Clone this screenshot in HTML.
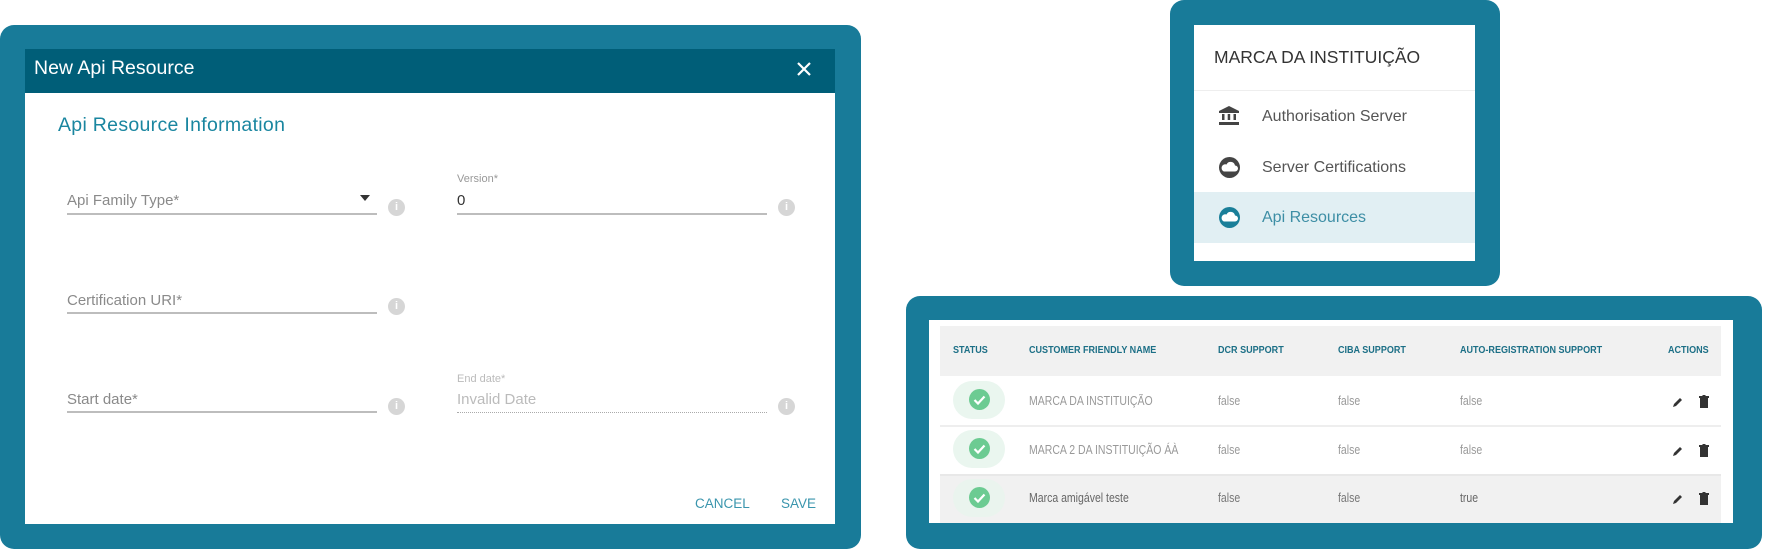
<!DOCTYPE html>
<html><head><meta charset="utf-8"><style>
*{margin:0;padding:0;box-sizing:border-box}
body{width:1766px;height:550px;background:#fff;position:relative;overflow:hidden;font-family:"Liberation Sans",sans-serif}
.a{position:absolute}
.frame{background:#187b99;border-radius:14px}
.t{position:absolute;white-space:nowrap;line-height:1}
.lbl{color:#8a8a8a;font-size:15px}
.ul{position:absolute;height:2px;background:#bdbdbd}
.info{position:absolute;width:17px;height:17px;border-radius:50%;background:#d6d6d6;color:#fff;font-size:11px;font-weight:bold;text-align:center;line-height:17px}
.th{position:absolute;top:344px;font-size:10.5px;font-weight:bold;color:#1c6f86;white-space:nowrap;transform:scaleX(0.86);transform-origin:left}
.td{position:absolute;font-size:12.5px;color:#999;white-space:nowrap;transform:scaleX(0.84);transform-origin:left}
.pill{position:absolute;left:953px;width:52px;height:38px;border-radius:19px;background:#eaf6ef}
.chk{position:absolute;left:16px;top:8px;width:21px;height:21px;border-radius:50%;background:#6ccb92}
</style></head><body>

<!-- Dialog -->
<div class="a frame" style="left:0;top:25px;width:861px;height:524px"></div>
<div class="a" style="left:25px;top:49px;width:810px;height:475px;background:#fff"></div>
<div class="a" style="left:25px;top:49px;width:810px;height:44px;background:#005e78"></div>
<div class="t" style="left:34px;top:59px;color:#fff;font-size:19.5px">New Api Resource</div>
<svg class="a" style="left:797px;top:62px" width="14" height="14" viewBox="0 0 14 14"><path d="M1 1L13 13M13 1L1 13" stroke="#fff" stroke-width="2.2"/></svg>
<div class="t" style="left:58px;top:116px;color:#1a86a0;font-size:19.5px;letter-spacing:0.3px">Api Resource Information</div>

<div class="t lbl" style="left:67px;top:193px">Api Family Type*</div>
<svg class="a" style="left:360px;top:195px" width="10" height="6"><path d="M0 0H10L5 6Z" fill="#333"/></svg>
<div class="ul" style="left:67px;top:213px;width:310px"></div>
<div class="info" style="left:388px;top:199px">i</div>

<div class="t" style="left:457px;top:174px;color:#999;font-size:11px">Version*</div>
<div class="t" style="left:457px;top:193px;color:#333;font-size:15px">0</div>
<div class="ul" style="left:457px;top:213px;width:310px"></div>
<div class="info" style="left:778px;top:199px">i</div>

<div class="t lbl" style="left:67px;top:293px">Certification URI*</div>
<div class="ul" style="left:67px;top:312px;width:310px"></div>
<div class="info" style="left:388px;top:298px">i</div>

<div class="t lbl" style="left:67px;top:392px">Start date*</div>
<div class="ul" style="left:67px;top:411px;width:310px"></div>
<div class="info" style="left:388px;top:398px">i</div>

<div class="t" style="left:457px;top:374px;color:#bbb;font-size:11px">End date*</div>
<div class="t" style="left:457px;top:392px;color:#bbb;font-size:15px">Invalid Date</div>
<div class="a" style="left:457px;top:412px;width:310px;border-top:1px dotted #aaa"></div>
<div class="info" style="left:778px;top:398px">i</div>

<div class="t" style="left:695px;top:497px;color:#3a95ad;font-size:13.5px">CANCEL</div>
<div class="t" style="left:781px;top:497px;color:#3a95ad;font-size:13.5px">SAVE</div>

<!-- Menu -->
<div class="a frame" style="left:1170px;top:0;width:330px;height:286px"></div>
<div class="a" style="left:1194px;top:25px;width:281px;height:236px;background:#fff"></div>
<div class="t" style="left:1214px;top:49px;color:#333;font-size:17.5px">MARCA DA INSTITUIÇÃO</div>
<div class="a" style="left:1194px;top:90px;width:281px;height:1px;background:#eee"></div>
<div class="a" style="left:1194px;top:192px;width:281px;height:51px;background:#e1eff3"></div>
<svg class="a" style="left:1219px;top:106px" width="20" height="20" viewBox="0 0 20 20"><path d="M10 0L20 5V7H0V5Z" fill="#444"/><rect x="3" y="8" width="2.5" height="6" fill="#444"/><rect x="8.7" y="8" width="2.5" height="6" fill="#444"/><rect x="14.5" y="8" width="2.5" height="6" fill="#444"/><rect x="0" y="16" width="20" height="3" fill="#444"/></svg>
<div class="t" style="left:1262px;top:109px;color:#555;font-size:16px">Authorisation Server</div>
<svg class="a" style="left:1219px;top:157px" width="21" height="21" viewBox="0 0 21 21"><circle cx="10.5" cy="10.5" r="10.5" fill="#444"/><path d="M5 14.5h11a3 3 0 0 0 0-6 4.5 4.5 0 0 0-8.5-1A3.5 3.5 0 0 0 5 14.5z" fill="#fff"/></svg>
<div class="t" style="left:1262px;top:160px;color:#555;font-size:16px">Server Certifications</div>
<svg class="a" style="left:1219px;top:207px" width="21" height="21" viewBox="0 0 21 21"><circle cx="10.5" cy="10.5" r="10.5" fill="#1a7f99"/><path d="M5 14.5h11a3 3 0 0 0 0-6 4.5 4.5 0 0 0-8.5-1A3.5 3.5 0 0 0 5 14.5z" fill="#fff"/></svg>
<div class="t" style="left:1262px;top:210px;color:#3d8ea5;font-size:16px">Api Resources</div>

<!-- Table -->
<div class="a frame" style="left:906px;top:296px;width:856px;height:253px"></div>
<div class="a" style="left:929px;top:320px;width:804px;height:203px;background:#fff"></div>
<div class="a" style="left:940px;top:326px;width:781px;height:50px;background:#f1f1f1"></div>
<div class="a" style="left:940px;top:425px;width:781px;height:2px;background:#eee"></div>
<div class="a" style="left:940px;top:474px;width:781px;height:49px;background:#f1f1f1;border-top:2px solid #e8e8e8"></div>
<div class="th" style="left:953px">STATUS</div>
<div class="th" style="left:1029px">CUSTOMER FRIENDLY NAME</div>
<div class="th" style="left:1218px">DCR SUPPORT</div>
<div class="th" style="left:1338px">CIBA SUPPORT</div>
<div class="th" style="left:1460px">AUTO-REGISTRATION SUPPORT</div>
<div class="th" style="left:1668px">ACTIONS</div>

<div class="pill" style="top:381px"><div class="chk"><svg width="21" height="21"><path d="M5.5 11l3.5 3.5 6.5-7" stroke="#fff" stroke-width="2.2" fill="none"/></svg></div></div>
<div class="pill" style="top:430px"><div class="chk"><svg width="21" height="21"><path d="M5.5 11l3.5 3.5 6.5-7" stroke="#fff" stroke-width="2.2" fill="none"/></svg></div></div>
<div class="pill" style="top:479px;background:#eaf4ee"><div class="chk"><svg width="21" height="21"><path d="M5.5 11l3.5 3.5 6.5-7" stroke="#fff" stroke-width="2.2" fill="none"/></svg></div></div>

<div class="td" style="left:1029px;top:394px">MARCA DA INSTITUIÇÃO</div>
<div class="td" style="left:1218px;top:394px">false</div>
<div class="td" style="left:1338px;top:394px">false</div>
<div class="td" style="left:1460px;top:394px">false</div>
<div class="td" style="left:1029px;top:443px">MARCA 2 DA INSTITUIÇÃO ÁÀ</div>
<div class="td" style="left:1218px;top:443px">false</div>
<div class="td" style="left:1338px;top:443px">false</div>
<div class="td" style="left:1460px;top:443px">false</div>
<div class="td" style="left:1029px;top:491px;color:#666">Marca amigável teste</div>
<div class="td" style="left:1218px;top:491px;color:#777">false</div>
<div class="td" style="left:1338px;top:491px;color:#777">false</div>
<div class="td" style="left:1460px;top:491px;color:#666">true</div>

<svg class="a" style="left:1672px;top:396px" width="12" height="12" viewBox="0 0 12 12"><path d="M1 11l1-3 6-6 2 2-6 6z" fill="#333"/></svg>
<svg class="a" style="left:1699px;top:395px" width="10" height="13" viewBox="0 0 10 13"><rect x="0" y="1" width="10" height="2" fill="#333"/><rect x="3.5" y="0" width="3" height="1" fill="#333"/><rect x="1" y="3" width="8" height="10" fill="#333"/></svg>
<svg class="a" style="left:1672px;top:445px" width="12" height="12" viewBox="0 0 12 12"><path d="M1 11l1-3 6-6 2 2-6 6z" fill="#333"/></svg>
<svg class="a" style="left:1699px;top:444px" width="10" height="13" viewBox="0 0 10 13"><rect x="0" y="1" width="10" height="2" fill="#333"/><rect x="3.5" y="0" width="3" height="1" fill="#333"/><rect x="1" y="3" width="8" height="10" fill="#333"/></svg>
<svg class="a" style="left:1672px;top:493px" width="12" height="12" viewBox="0 0 12 12"><path d="M1 11l1-3 6-6 2 2-6 6z" fill="#333"/></svg>
<svg class="a" style="left:1699px;top:492px" width="10" height="13" viewBox="0 0 10 13"><rect x="0" y="1" width="10" height="2" fill="#333"/><rect x="3.5" y="0" width="3" height="1" fill="#333"/><rect x="1" y="3" width="8" height="10" fill="#333"/></svg>

</body></html>
